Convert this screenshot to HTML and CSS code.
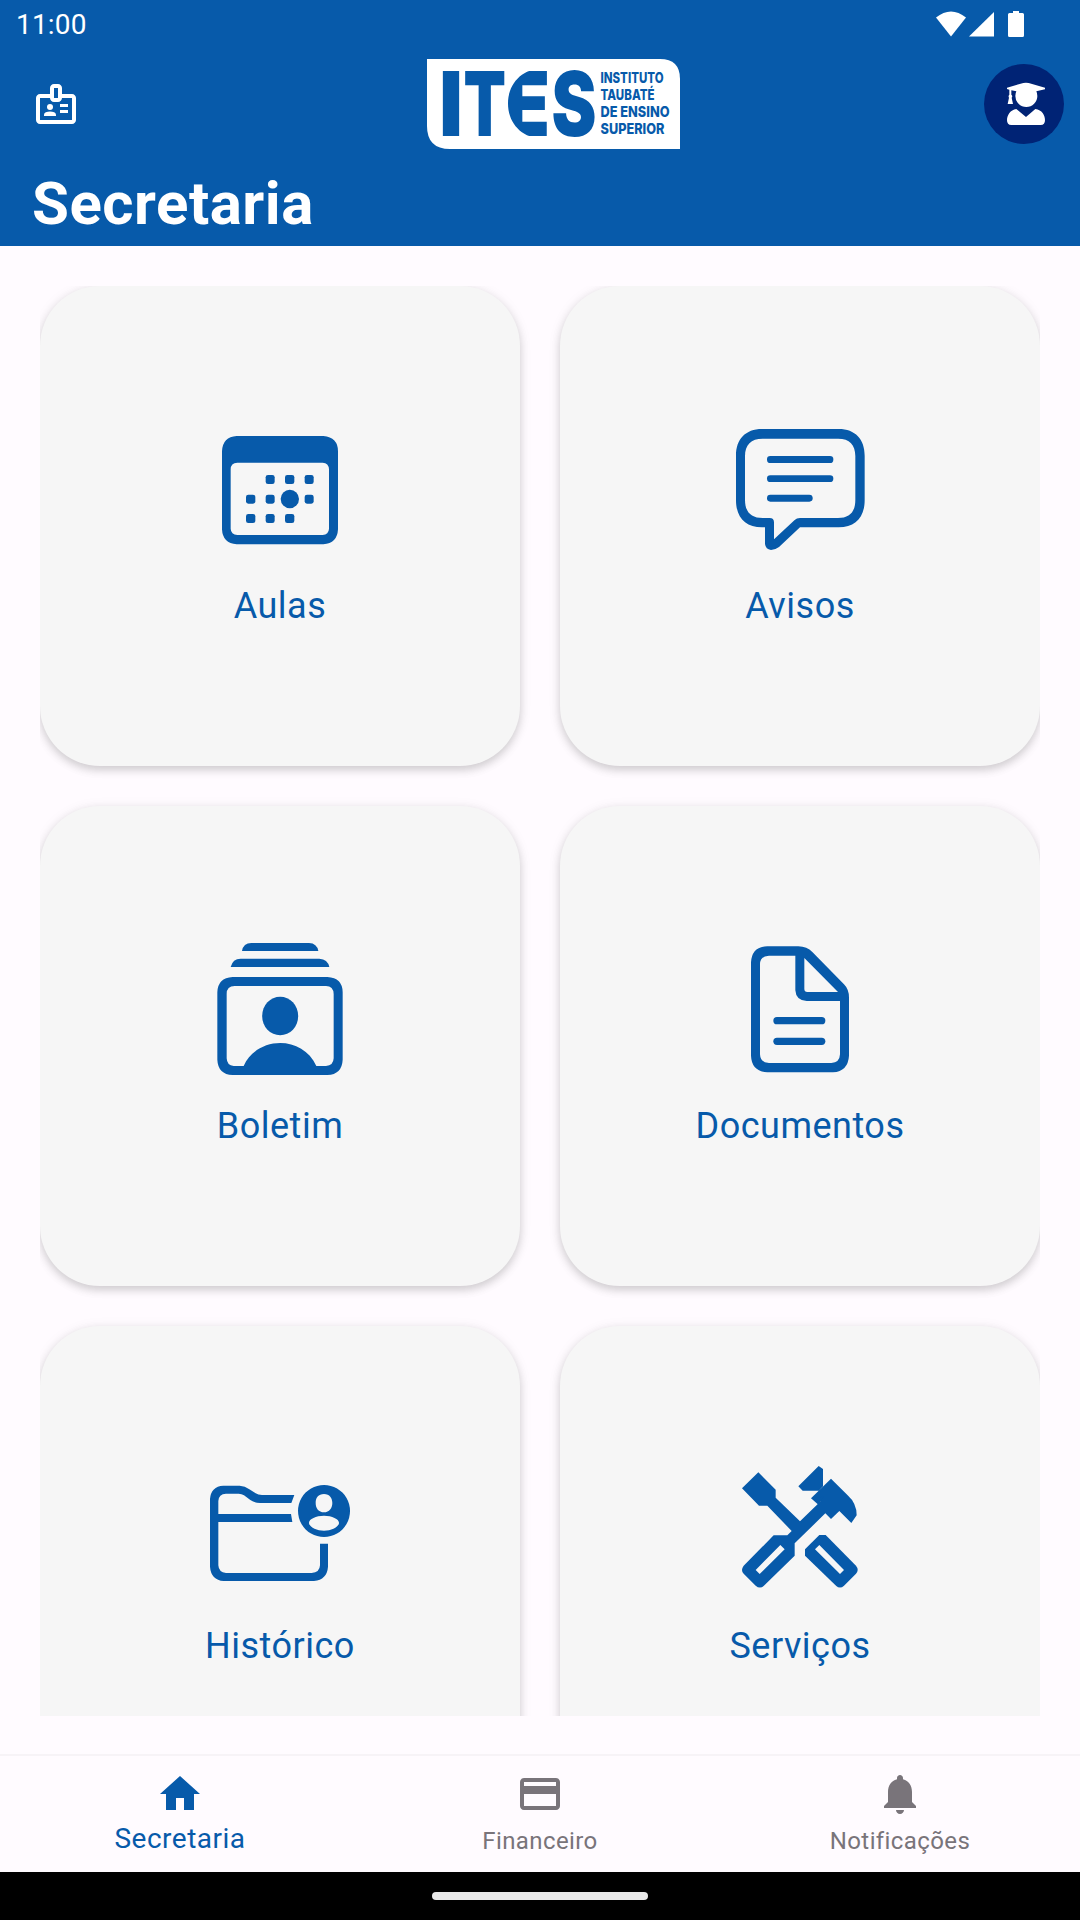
FILE: index.html
```html
<!DOCTYPE html>
<html lang="pt-BR">
<head>
  <meta charset="UTF-8" />
  <meta name="viewport" content="width=device-width, initial-scale=1.0"/>
  <title>Secretaria</title>
  <link rel="stylesheet" href="styles.css">
</head>
<body>
  <!-- HEADER -->
  <header class="header">
    <div class="status-bar">
      <span class="clock">11:00</span>
      <svg class="status-icons" viewBox="0 0 90 28" width="90" height="28">
        <path d="M0 7.500Q15-4.500 30 7.500L15 26.500z"/>
        <path d="M33 26.500L58 2v24.500z"/>
        <path d="M77 1h6v2h3.500q1.500 0 1.500 1.500v21q0 1.500-1.500 1.500h-13q-1.500 0-1.500-1.500v-21q0-1.500 1.500-1.500H77z"/>
      </svg>
    </div>

    <div class="toolbar">
      <svg class="badge-icon" viewBox="0 0 24 24">
        <path d="M20 7h-5V4c0-1.100-.9-2-2-2h-2c-1.100 0-2 .9-2 2v3H4c-1.100 0-2 .9-2 2v11c0 1.100.9 2 2 2h16c1.100 0 2-.9 2-2V9c0-1.100-.9-2-2-2zm-9-3h2v5h-2V4zm9 16H4V9h5c0 1.100.9 2 2 2h2c1.100 0 2-.9 2-2h5v11z"/>
        <circle cx="9" cy="13.500" r="1.500"/>
        <path d="M6 18v-.430c0-.6.360-1.150.920-1.390a5.200 5.200 0 0 1 4.160 0c.560.240.920.790.920 1.390V18zM14 12h4v1.500h-4zM14 15h4v1.500h-4z"/>
      </svg>

      <svg class="logo" viewBox="0 0 253 90">
        <path class="logo-plate" d="M0 0H233Q253 0 253 20V90H23Q0 90 0 67z"/>
        <g class="logo-name">
          <text x="12" y="77" textLength="24" lengthAdjust="spacingAndGlyphs">I</text>
          <text x="36.500" y="77" textLength="42.500" lengthAdjust="spacingAndGlyphs">T</text>
          <text x="77" y="77" textLength="46" lengthAdjust="spacingAndGlyphs">E</text>
          <text x="124.500" y="77" textLength="45" lengthAdjust="spacingAndGlyphs">S</text>
        </g>
        <!-- rounds off the back of the E -->
        <path d="M79 10H109C92 13 81 27 81 44.500S92 76 109 79H79z"/>
        <g class="logo-text">
          <text x="173.500" y="23.500" textLength="63" lengthAdjust="spacingAndGlyphs">INSTITUTO</text>
          <text x="173.500" y="41" textLength="54" lengthAdjust="spacingAndGlyphs">TAUBATÉ</text>
          <text x="173.500" y="58" textLength="69" lengthAdjust="spacingAndGlyphs">DE ENSINO</text>
          <text x="173.500" y="75" textLength="64" lengthAdjust="spacingAndGlyphs">SUPERIOR</text>
        </g>
      </svg>

      <div class="avatar">
        <svg viewBox="252 192 240 240">
          <path d="M321 263L370 249Q378 247 386 249L435 263V268L409 274Q412 280 412 288A33 33 0 0 1 346 288Q346 280 349 274L334 271V284Q339 288 335 293L339 312H323L327 293Q324 288 328 284V269L321 267z"/>
          <path d="M349 327L378 351L406 327C426 330 435 345 435 361Q435 375 422 375H334Q321 375 321 361C321 345 331 330 349 327z"/>
        </svg>
      </div>
    </div>

    <h1>Secretaria</h1>
  </header>

  <!-- MENU -->
  <main class="content">
    <div class="menu-grid">
      <a class="card" href="#">
        <svg viewBox="0 -30 480 480">
          <path fill-rule="evenodd" d="M110 78H370Q414 82 414 124V358Q412 400 370 403H110Q68 400 66 358V124Q68 80 110 78zM112 158Q92 159 92 178V356Q93 374 112 375H368Q386 374 387 356V178Q386 159 368 158z"/>
          <rect x="197" y="195" width="27" height="27" rx="7"/>
          <rect x="255" y="195" width="28" height="27" rx="7"/>
          <rect x="314" y="195" width="27" height="27" rx="7"/>
          <rect x="138" y="254" width="28" height="27" rx="7"/>
          <rect x="197" y="254" width="27" height="27" rx="7"/>
          <circle cx="269.500" cy="267" r="27.500"/>
          <rect x="314" y="254" width="27" height="27" rx="7"/>
          <rect x="138" y="312" width="28" height="27" rx="7"/>
          <rect x="197" y="312" width="27" height="27" rx="7"/>
          <rect x="255" y="312" width="28" height="27" rx="7"/>
        </svg>
        <span>Aulas</span>
      </a>

      <a class="card" href="#">
        <svg viewBox="30 -30 480 480">
          <path fill-rule="evenodd" d="M156 57H386C436 57 464 88 464 137V271C464 321 436 352 386 352H270L207 411Q195 420 183 420Q167 418 165 402V352H156C106 352 78 321 78 271V137C78 88 106 57 156 57zM158 86C123 86 105 104 105 139V269C105 306 123 324 158 324H179Q192 324 192 337V388L254 330Q260 324 270 324H384C419 324 436 306 436 269V139C436 104 419 86 384 86z"/>
          <rect x="171" y="138" width="199" height="21" rx="10"/>
          <rect x="171" y="196" width="199" height="20" rx="10"/>
          <rect x="171" y="254" width="137" height="21" rx="10"/>
        </svg>
        <span>Avisos</span>
      </a>

      <a class="card" href="#">
        <svg viewBox="0 0 480 480">
          <path d="M126 93Q130 69 154 69H327Q351 70 355 93zM92 141Q98 116 122 116H358Q383 117 388 141z"/>
          <path fill-rule="evenodd" d="M98 171H382Q428 174 428 217V419Q426 463 382 465H98Q54 463 52 419V217Q53 174 98 171zM104 198Q80 198 80 222V415Q81 437 101 438H131C172 348 307 345 349 438H378Q400 437 401 415V222Q400 198 378 198z"/>
          <ellipse cx="240.500" cy="288" rx="54" ry="58"/>
        </svg>
        <span>Boletim</span>
      </a>

      <a class="card" href="#">
        <svg viewBox="120 0 480 480">
          <path fill-rule="evenodd" d="M262 79H355Q381 80 397 96L492 193Q507 208 507 233V407Q504 454 459 457H262Q215 454 213 407V127Q216 80 262 79zM267 107Q241 108 240 132V403Q241 428 267 429H454Q479 428 480 403V243H380Q348 242 346 211V107zM373 114V207Q373 216 382 216H474z"/>
          <rect x="280" y="291" width="156" height="22" rx="11"/>
          <rect x="280" y="353" width="156" height="22" rx="11"/>
        </svg>
        <span>Documentos</span>
      </a>

      <a class="card" href="#">
        <svg viewBox="30 -30 480 480">
          <path fill-rule="evenodd" d="M100 107H149Q165 108 178 118L197 130Q204 135 216 135H313L304 159H210Q194 159 181 150L162 136Q155 131 146 131H108Q86 132 85 153V192H303L307 216H85V346Q86 367 108 369H365Q389 368 390 346V281H414V350Q411 389 372 393H101Q63 390 60 350V147Q63 109 100 107z"/>
          <path fill-rule="evenodd" d="M402 105a78 78 0 1 0 .1 0zM402 132C419 132 427 144 427 159S418 187 402 187S377 175 377 159S385 132 402 132zM402 197C426 197 447 207 447 218C447 231 425 242 402 242S357 231 357 218C357 207 378 197 402 197z"/>
        </svg>
        <span>Histórico</span>
      </a>

      <a class="card" href="#">
        <svg viewBox="30 -30 480 480">
          <path d="M96 115L145 67L197 119V143L270 214L332 154L303 145L320 128L363 86L413 136Q440 160 440 196L424 219L388 183L363 207L346 190L254 280V317L164 405Q151 419 137 407L101 371Q91 361 101 347L191 256H232L245 243L172 167H147zM265 109L326 48L339 57V109L326 122H278z"/>
          <path d="M303 145L326 165L340 140z"/>
          <path d="M328 255H347L438 347Q448 359 438 371L402 407Q390 418 378 407L285 317V298z"/>
          <path class="cutout" d="M211 285L224 298L149 372L137 360zM328 285L402 360L390 372L315 298z"/>
        </svg>
        <span>Serviços</span>
      </a>
    </div>
  </main>

  <!-- BOTTOM NAV -->
  <nav class="bottom-nav">
    <a class="active" href="#">
      <svg viewBox="0 0 24 24"><path d="M10 20v-6h4v6h5v-8h3L12 3 2 12h3v8z"/></svg>
      <span>Secretaria</span>
    </a>
    <a href="#">
      <svg viewBox="0 0 24 24"><path d="M20 4H4c-1.110 0-1.990.890-1.990 2L2 18c0 1.110.890 2 2 2h16c1.110 0 2-.890 2-2V6c0-1.110-.890-2-2-2zm0 14H4v-6h16v6zm0-10H4V6h16v2z"/></svg>
      <span>Financeiro</span>
    </a>
    <a href="#">
      <svg viewBox="0 0 24 24"><path d="M12 22c1.100 0 2-.9 2-2h-4c0 1.100.890 2 2 2zm6-6v-5c0-3.070-1.640-5.640-4.500-6.320V4c0-.830-.670-1.500-1.500-1.500s-1.500.670-1.500 1.500v.680C7.630 5.360 6 7.920 6 11v5l-2 2v1h16v-1l-2-2z"/></svg>
      <span>Notificações</span>
    </a>
  </nav>
  <div class="gesture-bar"><div class="pill"></div></div>
</body>
</html>
```

FILE: styles.css
```css
* {
  margin: 0;
  padding: 0;
  box-sizing: border-box;
}

body {
  width: 1080px;
  height: 1920px;
  display: flex;
  flex-direction: column;
  overflow: hidden;
  background-color: #fffbff;
  font-family: Roboto, sans-serif;
}

a {
  text-decoration: none;
}

/* Header */
.header {
  height: 246px;
  background-color: #075aaa;
  color: #fff;
}

.header svg {
  fill: #fff;
}

.status-bar {
  height: 48px;
  padding: 0 54px 0 16px;
  display: flex;
  justify-content: space-between;
  align-items: center;
}

.clock {
  padding-top: 2px;
  font-size: 28px;
  line-height: 48px;
  letter-spacing: 0.2px;
}

.toolbar {
  height: 112px;
  padding: 0 16px 0 32px;
  display: flex;
  justify-content: space-between;
  align-items: center;
}

.badge-icon {
  width: 48px;
  height: 48px;
}

.logo {
  width: 253px;
  height: 90px;
  margin-left: 42px;
}

.header .logo-name,
.header .logo-text {
  fill: #075aaa;
  font-family: Inter, sans-serif;
}

.logo-name {
  font-size: 89px;
  font-weight: 900;
}

.logo-text {
  font-size: 15px;
  font-weight: 800;
}

.avatar {
  width: 80px;
  height: 80px;
  border-radius: 50%;
  background-color: #002375;
}

.avatar svg {
  display: block;
}

h1 {
  padding: 1px 0 0 32px;
  font-size: 60px;
  line-height: 86px;
  font-weight: bold;
  letter-spacing: 0.5px;
}

/* Menu cards */
.content {
  height: 1430px;
  margin: 40px 40px 38px;
  overflow: hidden;
}

.menu-grid {
  display: grid;
  grid-template-columns: 480px 480px;
  grid-auto-rows: 480px;
  gap: 40px;
}

.card {
  padding-top: 114px;
  display: flex;
  flex-direction: column;
  align-items: center;
  gap: 22px;
  border-radius: 60px;
  background-color: #f6f6f6;
  box-shadow: 0 4px 9px rgba(0, 0, 0, 0.15), 0 2px 14px rgba(0, 0, 0, 0.07);
  color: #075aaa;
}

.card svg {
  width: 160px;
  height: 160px;
  fill: #075aaa;
}

.card .cutout {
  fill: #f6f6f6;
}

.card span {
  font-size: 36px;
  line-height: 48px;
  letter-spacing: 0.5px;
}

/* Bottom navigation */
.bottom-nav {
  height: 118px;
  display: flex;
  border-top: 2px solid #f7f3f7;
}

.bottom-nav a {
  flex: 1;
  padding-top: 14px;
  display: flex;
  flex-direction: column;
  align-items: center;
  color: #79747a;
  font-size: 24px;
  letter-spacing: 0.4px;
}

.bottom-nav svg {
  width: 48px;
  height: 48px;
  fill: #79747a;
}

.bottom-nav span {
  line-height: 46px;
}

.bottom-nav .active {
  color: #075aaa;
  font-size: 28px;
  letter-spacing: 0.5px;
}

.bottom-nav .active svg {
  fill: #075aaa;
}

.bottom-nav .active span {
  line-height: 42px;
}

.gesture-bar {
  height: 48px;
  display: flex;
  justify-content: center;
  align-items: center;
  background-color: #000;
}

.pill {
  width: 216px;
  height: 8px;
  border-radius: 4px;
  background-color: #e9e9e9;
}
```
